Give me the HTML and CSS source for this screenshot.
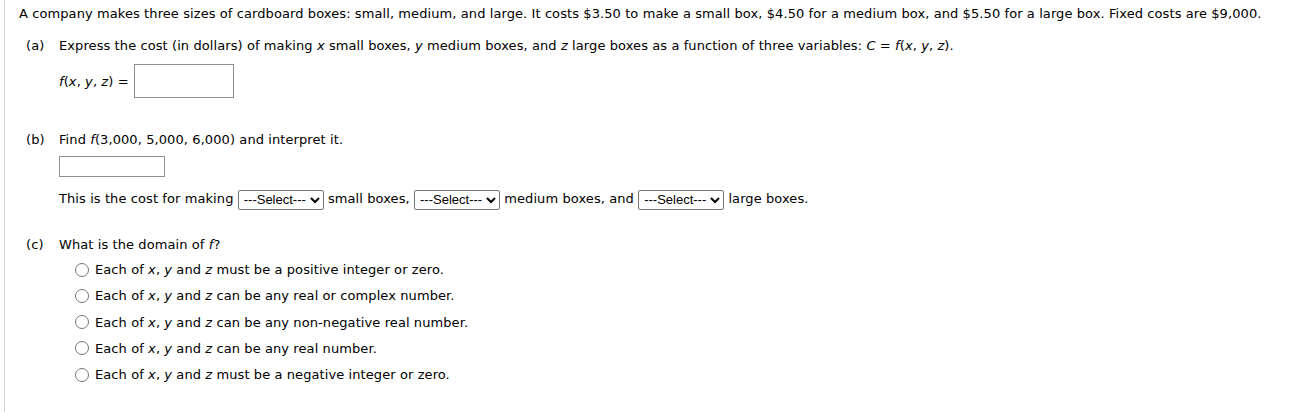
FILE: index.html
```html
<!DOCTYPE html>
<html>
<head>
<meta charset="utf-8">
<link rel="stylesheet" href="styles.css">
</head>
<body>
<div class="page">
  <p class="intro">A company makes three sizes of cardboard boxes: small, medium, and large. It costs $3.50 to make a small box, $4.50 for a medium box, and $5.50 for a large box. Fixed costs are $9,000.</p>

  <div class="part part-a">
    <div class="qrow"><span class="lbl">(a)</span><span>Express the cost (in dollars) of making <i>x</i> small boxes, <i>y</i> medium boxes, and <i>z</i> large boxes as a function of three variables: <i>C</i> = <i>f</i>(<i>x</i>, <i>y</i>, <i>z</i>).</span></div>
    <div class="body">
      <div class="frow"><span><i>f</i>(<i>x</i>, <i>y</i>, <i>z</i>) = </span><input class="big" type="text"></div>
    </div>
  </div>

  <div class="part part-b">
    <div class="qrow"><span class="lbl">(b)</span><span>Find <i>f</i>(3,000, 5,000, 6,000) and interpret it.</span></div>
    <div class="body">
      <input class="small" type="text">
      <div class="srow">This is the cost for making <select class="sel"><option>---Select---</option></select> small boxes, <select class="sel"><option>---Select---</option></select> medium boxes, and <select class="sel"><option>---Select---</option></select> large boxes.</div>
    </div>
  </div>

  <div class="part part-c">
    <div class="qrow"><span class="lbl">(c)</span><span>What is the domain of <i>f</i>?</span></div>
    <div class="body">
      <ul class="opts">
        <li><input type="radio" name="d"><span>Each of <i>x</i>, <i>y</i> and <i>z</i> must be a positive integer or zero.</span></li>
        <li><input type="radio" name="d"><span>Each of <i>x</i>, <i>y</i> and <i>z</i> can be any real or complex number.</span></li>
        <li><input type="radio" name="d"><span>Each of <i>x</i>, <i>y</i> and <i>z</i> can be any non-negative real number.</span></li>
        <li><input type="radio" name="d"><span>Each of <i>x</i>, <i>y</i> and <i>z</i> can be any real number.</span></li>
        <li><input type="radio" name="d"><span>Each of <i>x</i>, <i>y</i> and <i>z</i> must be a negative integer or zero.</span></li>
      </ul>
    </div>
  </div>
</div>
</body>
</html>
```

FILE: styles.css
```css
html, body {
  margin: 0;
  padding: 0;
  background: #fff;
}
body {
  font-family: "DejaVu Sans", Verdana, sans-serif;
  font-size: 13px;
  letter-spacing: 0.09px;
  color: #000;
}
.page {
  margin-left: 4px;
  border-left: 1px solid #d4d4d4;
  padding: 6px 0 20px 14px;
  min-height: 387px;
  box-sizing: border-box;
}
.intro {
  margin: 0;
  line-height: 16px;
}
.part-a { margin-top: 16px; }
.part-b { margin-top: 34px; }
.part-c { margin-top: 27px; }
.qrow {
  display: flex;
  line-height: 16px;
  padding-left: 7px;
}
.lbl {
  width: 33px;
  flex: none;
}
.body {
  padding-left: 40px;
}
.frow {
  display: flex;
  align-items: center;
  margin-top: 10px;
  gap: 5px;
}
input.big {
  width: 100px;
  height: 34px;
  box-sizing: border-box;
  border: 1px solid #8f8f8f;
  margin: 0;
}
input.small {
  display: block;
  width: 106px;
  height: 21px;
  box-sizing: border-box;
  border: 1px solid #8f8f8f;
  margin: 8px 0 0 0;
}
.srow {
  margin-top: 12px;
  line-height: 20px;
}
.sel {
  font-family: "Liberation Sans", Arial, sans-serif;
  font-size: 13px;
  letter-spacing: 0;
  height: 20px;
  width: 86px;
  border: 1px solid #767676;
  border-radius: 2px;
  background: #fff;
  color: #000;
  margin: 0;
  padding: 0 0 0 1px;
  vertical-align: middle;
}
.opts {
  list-style: none;
  margin: 9px 0 0 0;
  padding: 0 0 0 16px;
}
.opts li {
  display: flex;
  align-items: center;
  height: 16px;
  margin-bottom: 10.25px;
}
.opts input {
  margin: 0 6px 0 0;
  width: 14px;
  height: 14px;
}
```
